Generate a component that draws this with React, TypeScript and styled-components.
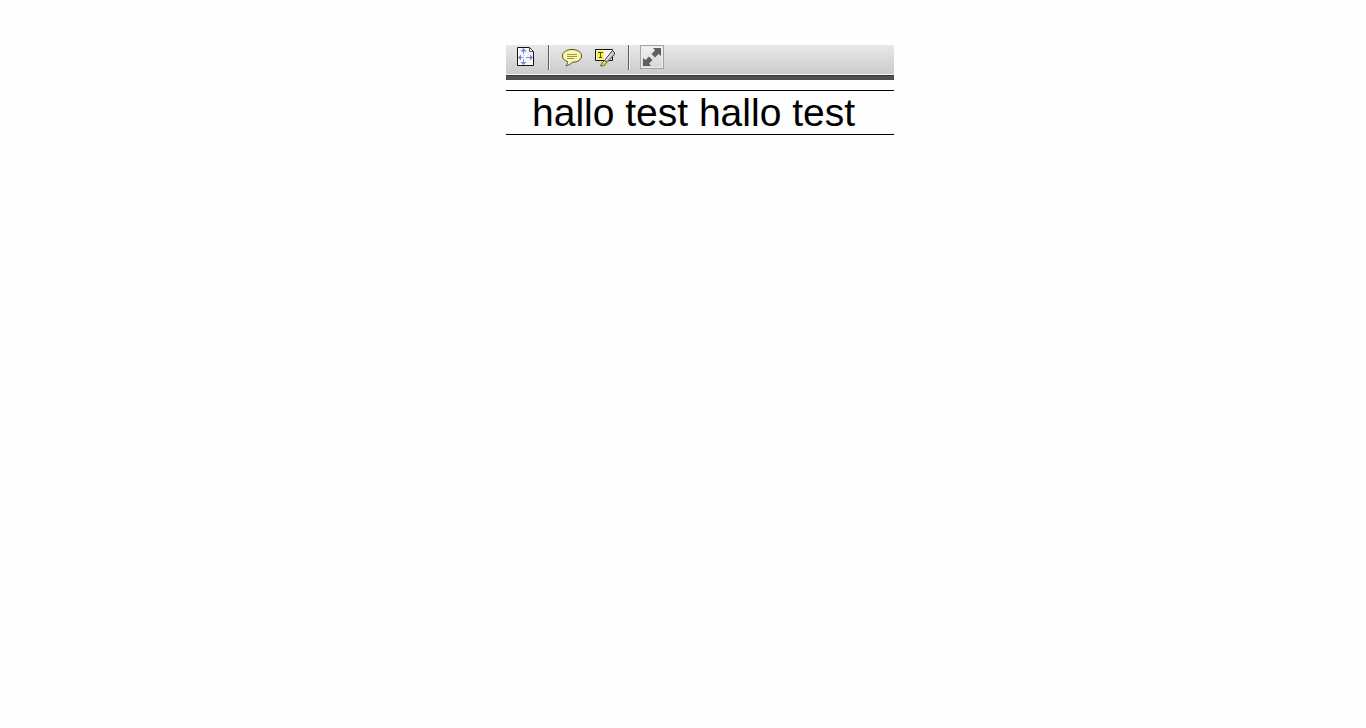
import React from 'react';
import styled, { createGlobalStyle } from 'styled-components';

const GlobalStyle = createGlobalStyle`
  body {
    margin: 0;
    background: #fefefe;
    font-family: "Liberation Sans", Arial, sans-serif;
  }
`;

const Page = styled.main`
  display: flex;
  justify-content: center;
  padding: 45px 0 0 34px;
`;

const Viewer = styled.section`
  width: 100%;
  max-width: 388px;
`;

const Toolbar = styled.div`
  display: flex;
  align-items: flex-start;
  gap: 10px;
  height: 29px;
  padding: 0 8px;
  background: linear-gradient(#e8e8e8, #cbcbcb);
  border-bottom: 1px solid #f6f6f6;
`;

const ToolButton = styled.button<{ $framed?: boolean }>`
  box-sizing: border-box;
  width: 24px;
  height: 24px;
  padding: 0;
  border: 1px solid ${(p) => (p.$framed ? '#a2a2a2' : 'transparent')};
  background: ${(p) => (p.$framed ? 'linear-gradient(#f2f2f2, #d6d6d6)' : 'none')};
  box-shadow: ${(p) => (p.$framed ? 'inset 0 0 0 1px #eeeeee' : 'none')};

  svg {
    display: block;
    margin: -1px;
  }
`;

const Separator = styled.div`
  width: 1px;
  height: 25px;
  background: #5c5c5c;
  border-right: 1px solid #f0f0f0;
`;

const Divider = styled.div`
  height: 4px;
  background: #4e4e4e;
  border-top: 1px solid #383838;
`;

const Document = styled.div`
  margin-top: 10px;
  padding: 0 26px;
  border-top: 1px solid #000;
  border-bottom: 1px solid #000;
`;

const Line = styled.p`
  margin: 0;
  color: #000;
  font-size: 39px;
  line-height: 43px;
  white-space: nowrap;
`;

const FitPageIcon = () => (
  <svg width="24" height="24" viewBox="0 0 24 24" fill="none" aria-hidden="true">
    <path d="M3.5 2.5H15.5L19.5 6.5V20.5H3.5Z" fill="#f7f8fa" stroke="#151515" strokeLinejoin="round" />
    <path d="M15.5 3V6.5H19" stroke="#555" fill="#fff" />
    <path d="M9.5 5V9M9.5 15V19M5 12.5H8.5M12 12.5H18" stroke="#7b8fcc" />
    <path d="M9.5 3L12.5 6.5H6.5ZM9.5 20L12.5 17H6.5ZM4 12.5L7 9.5V15.5ZM19 12.5L16 9.5V15.5Z" fill="#7388c8" />
    <path d="M9.5 10V15" stroke="#b5bfdf" strokeDasharray="1 1" />
  </svg>
);

const CommentIcon = () => (
  <svg width="24" height="24" viewBox="0 0 24 24" fill="none" aria-hidden="true">
    <path
      d="M12 4.5C17.6 4.5 21.5 7.4 21.5 11C21.5 14.8 17.4 17.3 12.3 17.3C10.8 18.9 8.3 20.5 6 20.8C7.2 19.4 7.7 18 7.4 16.5C4.3 15.5 2.5 13.5 2.5 11C2.5 7.4 6.5 4.5 12 4.5Z"
      fill="#fcf8a4"
      stroke="#4c4c3c"
    />
    <path d="M7 9.5H17M7 11.5H17M7 13.5H14" stroke="#9b965d" />
  </svg>
);

const HighlightIcon = () => (
  <svg width="24" height="24" viewBox="0 0 24 24" fill="none" aria-hidden="true">
    <path d="M1.5 4.5H18.5V15.5H1.5Z" fill="#f6f6f6" stroke="#111" />
    <path d="M3 6H10V14H3Z" fill="#fff03c" />
    <path d="M4 7.5H9M6.5 7.5V13M5 12.5H8" stroke="#5f4c00" />
    <path d="M18.5 5.5L20.5 7.5V9.5L13 17.5L10.5 15.5Z" fill="#bdbdbd" stroke="#444" strokeLinejoin="round" />
    <path d="M18.3 8L12.3 15" stroke="#f4f4f4" />
    <path d="M10.5 15.5L12.5 17.5L10.5 20.5L6.5 21L8 18Z" fill="#e9dc42" stroke="#6e6728" strokeLinejoin="round" />
  </svg>
);

const ExpandIcon = () => (
  <svg width="24" height="24" viewBox="0 0 24 24" fill="#606060" aria-hidden="true">
    <path d="M13 3H21V11L18.5 9L15 12.5L11.5 9L15 5.5Z" />
    <path d="M3 13L5.5 15L9 11.5L12.5 15L9 18.5L11 21H3Z" />
  </svg>
);

export default function App() {
  return (
    <>
      <GlobalStyle />
      <Page>
        <Viewer>
          <Toolbar role="toolbar">
            <ToolButton type="button" aria-label="Fit page">
              <FitPageIcon />
            </ToolButton>
            <Separator />
            <ToolButton type="button" aria-label="Comment">
              <CommentIcon />
            </ToolButton>
            <ToolButton type="button" aria-label="Highlight text">
              <HighlightIcon />
            </ToolButton>
            <Separator />
            <ToolButton type="button" aria-label="Full screen" $framed>
              <ExpandIcon />
            </ToolButton>
          </Toolbar>
          <Divider />
          <Document>
            <Line>hallo test hallo test</Line>
          </Document>
        </Viewer>
      </Page>
    </>
  );
}
